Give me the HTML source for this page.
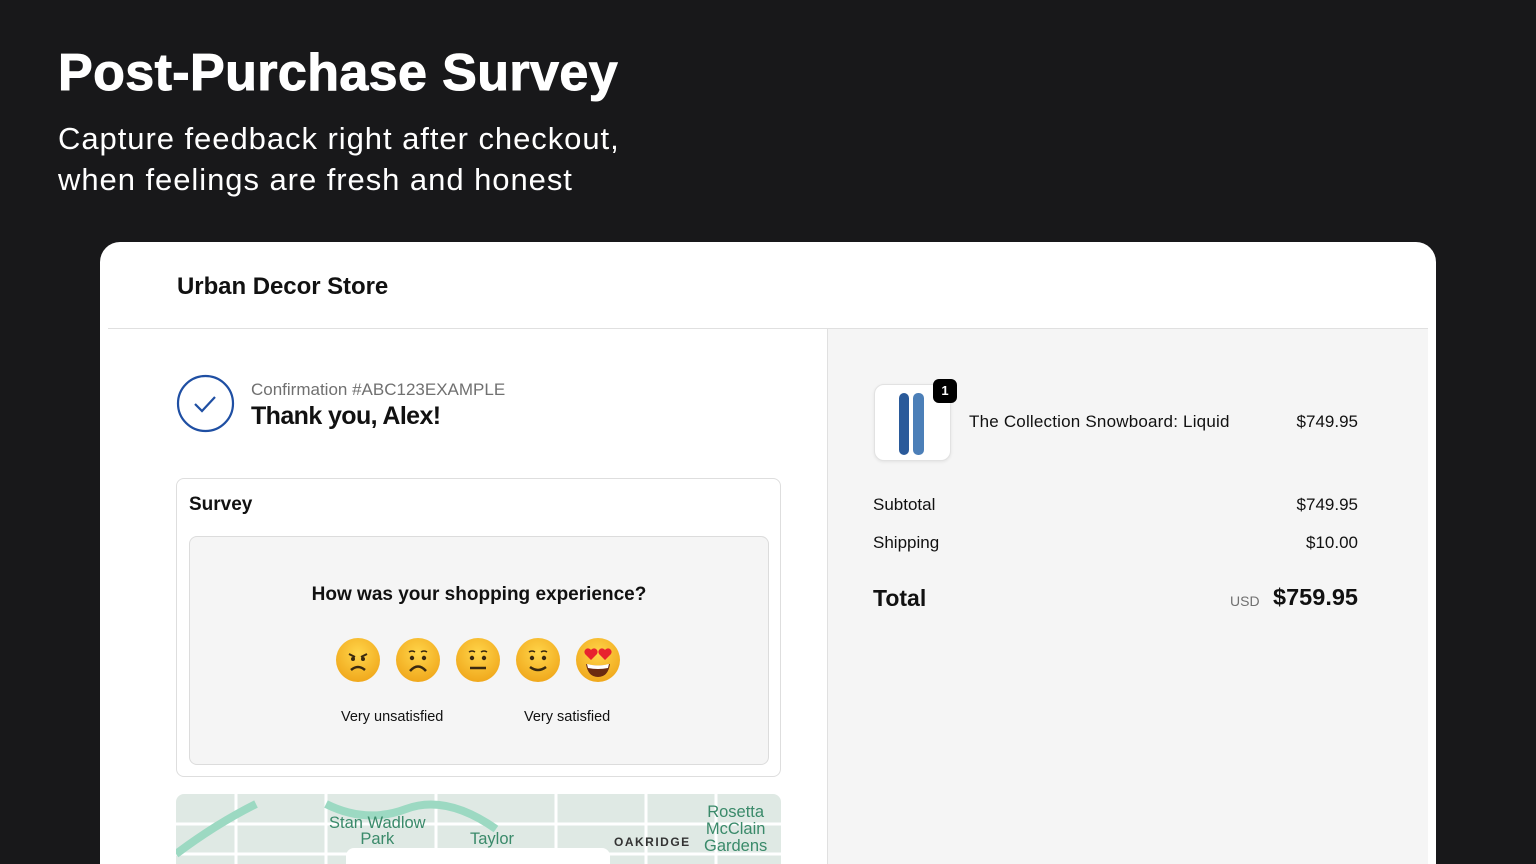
<!DOCTYPE html>
<html><head><meta charset="utf-8"><style>
*{margin:0;padding:0;box-sizing:border-box}
html,body{width:1536px;height:864px;overflow:hidden}
body{background:#18181a;font-family:"Liberation Sans",sans-serif;position:relative}
.abs{position:absolute}
h1{position:absolute;left:58px;top:43px;color:#fff;font-size:52px;font-weight:900;letter-spacing:0.4px;-webkit-text-stroke:1px #fff}
.sub{left:58px;top:118px;color:#fff;font-size:31px;line-height:41px;letter-spacing:0.95px}
.card{left:100px;top:242px;width:1336px;height:622px;background:#fff;border-radius:20px 20px 0 0;overflow:hidden}
.t{color:#111}
</style></head><body>
<h1>Post-Purchase Survey</h1>
<div class="abs sub">Capture feedback right after checkout,<br>when feelings are fresh and honest</div>
<div class="abs card">
 <div class="abs t" style="left:77px;top:31px;font-size:24px;font-weight:bold;letter-spacing:-0.05px">Urban Decor Store</div>
 <div class="abs" style="left:8px;top:86px;width:1320px;height:1px;background:#e0e0e0"></div>
 <div class="abs" style="left:727px;top:87px;width:601px;height:535px;background:#f5f5f5;border-left:1px solid #e0e0e0"></div>
 <svg class="abs" style="left:76px;top:132px" width="60" height="60"><circle cx="29.5" cy="29.5" r="27.5" fill="none" stroke="#1f4fa3" stroke-width="2.2"/><path d="M19 30l7 7 13-14" fill="none" stroke="#1f4fa3" stroke-width="2.2"/></svg>
 <div class="abs" style="left:151px;top:138px;font-size:17px;color:#707070">Confirmation #ABC123EXAMPLE</div>
 <div class="abs t" style="left:151px;top:160px;font-size:25px;font-weight:bold;letter-spacing:-0.6px">Thank you, Alex!</div>
 <div class="abs" style="left:76px;top:236px;width:605px;height:299px;border:1px solid #dedede;border-radius:8px"></div>
 <div class="abs t" style="left:89px;top:252px;font-size:19px;font-weight:bold">Survey</div>
 <div class="abs" style="left:89px;top:294px;width:580px;height:229px;background:#f5f5f5;border:1px solid #dcdcdc;border-radius:8px"></div>
 <div class="abs t" style="left:89px;top:342px;width:580px;text-align:center;font-size:19px;font-weight:bold">How was your shopping experience?</div>
 <svg class="abs" style="left:236px;top:395px" width="290" height="48">
  <defs><radialGradient id="g" cx="50%" cy="35%" r="65%"><stop offset="0" stop-color="#ffd54a"/><stop offset="1" stop-color="#f0a81c"/></radialGradient></defs>
  <g><ellipse cx="22" cy="23" rx="22" ry="22" fill="url(#g)"/><path d="M13 17l6 3M31 17l-6 3" stroke="#3a2a10" stroke-width="2"/><circle cx="17" cy="22" r="2" fill="#3a2a10"/><circle cx="27" cy="22" r="2" fill="#3a2a10"/><path d="M15 33q7-6 14 0" stroke="#3a2a10" stroke-width="2.5" fill="none"/></g>
  <g transform="translate(60,0)"><ellipse cx="22" cy="23" rx="22" ry="22" fill="url(#g)"/><path d="M13 15q3-2 6 0M25 15q3-2 6 0" stroke="#3a2a10" stroke-width="1.5" fill="none"/><circle cx="16" cy="21" r="2.2" fill="#3a2a10"/><circle cx="28" cy="21" r="2.2" fill="#3a2a10"/><path d="M14 34q8-9 16 0" stroke="#3a2a10" stroke-width="2.5" fill="none"/></g>
  <g transform="translate(120,0)"><ellipse cx="22" cy="23" rx="22" ry="22" fill="url(#g)"/><path d="M13 15q3-2 6 0M25 15q3-2 6 0" stroke="#3a2a10" stroke-width="1.5" fill="none"/><circle cx="16" cy="21" r="2.2" fill="#3a2a10"/><circle cx="28" cy="21" r="2.2" fill="#3a2a10"/><path d="M14 31h16" stroke="#3a2a10" stroke-width="2.5"/></g>
  <g transform="translate(180,0)"><ellipse cx="22" cy="23" rx="22" ry="22" fill="url(#g)"/><path d="M13 15q3-2 6 0M25 15q3-2 6 0" stroke="#3a2a10" stroke-width="1.5" fill="none"/><circle cx="16" cy="21" r="2.2" fill="#3a2a10"/><circle cx="28" cy="21" r="2.2" fill="#3a2a10"/><path d="M14 30q8 6 16 0" stroke="#3a2a10" stroke-width="2.5" fill="none"/></g>
  <g transform="translate(240,0)"><ellipse cx="22" cy="23" rx="22" ry="22" fill="url(#g)"/><path d="M15 23l-6-6a3.5 3.5 0 016-4a3.5 3.5 0 016 4z" fill="#e8232e"/><path d="M29 23l-6-6a3.5 3.5 0 016-4a3.5 3.5 0 016 4z" fill="#e8232e"/><path d="M10 27q12 3 24 0q-2 13-12 13q-10 0-12-13z" fill="#6b2a10"/><path d="M11 27q11 3 22 0l-1 4q-10 2-20 0z" fill="#fff"/></g>
 </svg>
 <div class="abs t" style="left:241px;top:467px;font-size:14.5px">Very unsatisfied</div>
 <div class="abs t" style="left:424px;top:467px;font-size:14.5px">Very satisfied</div>
 <div class="abs" style="left:76px;top:552px;width:605px;height:70px;background:#dfe9e4;border-radius:8px 8px 0 0;overflow:hidden">
  <svg width="605" height="70" style="position:absolute;left:0;top:0"><path d="M0 30h605M0 60h605M60 0v100M150 0v100M260 0v100M380 0v100M470 0v100M540 0v100" stroke="#fff" stroke-width="3"/><path d="M150 10q40 20 80 5t90 20M0 60q40-30 80-50" stroke="#9cd9c2" stroke-width="8" fill="none"/></svg>
  <div class="abs" style="left:153px;top:21px;font-size:16.5px;color:#3a8a6a;line-height:16px;text-align:center">Stan Wadlow<br>Park</div>
  <div class="abs" style="left:294px;top:36px;font-size:16.5px;color:#3a8a6a">Taylor</div>
  <div class="abs" style="left:438px;top:41px;font-size:12px;color:#333;letter-spacing:1.5px;font-weight:bold">OAKRIDGE</div>
  <div class="abs" style="left:528px;top:10px;font-size:16.5px;color:#3a8a6a;line-height:17px;text-align:center">Rosetta<br>McClain<br>Gardens</div>
  <div class="abs" style="left:170px;top:54px;width:264px;height:16px;background:#fff;border-radius:8px 8px 0 0"></div>
 </div>
 <div class="abs" style="left:774px;top:142px;width:77px;height:77px;background:#fff;border:1px solid #e2e2e2;border-radius:10px;box-shadow:0 1px 3px rgba(0,0,0,.08)"></div>
 <div class="abs" style="left:799px;top:151px;width:10px;height:62px;background:#2a5a9a;border-radius:5px"></div>
 <div class="abs" style="left:813px;top:151px;width:11px;height:62px;background:#4c7fb8;border-radius:5px"></div>
 <div class="abs" style="left:833px;top:137px;width:24px;height:24px;background:#000;border-radius:6px;color:#fff;font-size:13px;font-weight:bold;text-align:center;line-height:24px">1</div>
 <div class="abs t" style="left:869px;top:170px;font-size:17px;letter-spacing:0.2px">The Collection Snowboard: Liquid</div>
 <div class="abs t" style="left:1158px;top:170px;width:100px;text-align:right;font-size:17px">$749.95</div>
 <div class="abs t" style="left:773px;top:253px;font-size:17px">Subtotal</div>
 <div class="abs t" style="left:1158px;top:253px;width:100px;text-align:right;font-size:17px">$749.95</div>
 <div class="abs t" style="left:773px;top:291px;font-size:17px">Shipping</div>
 <div class="abs t" style="left:1158px;top:291px;width:100px;text-align:right;font-size:17px">$10.00</div>
 <div class="abs t" style="left:773px;top:343px;font-size:23px;font-weight:bold">Total</div>
 <div class="abs" style="left:1130px;top:351px;font-size:14px;color:#707070">USD</div>
 <div class="abs t" style="left:1150px;top:342px;width:108px;text-align:right;font-size:23.5px;font-weight:bold">$759.95</div>
</div>
</body></html>
